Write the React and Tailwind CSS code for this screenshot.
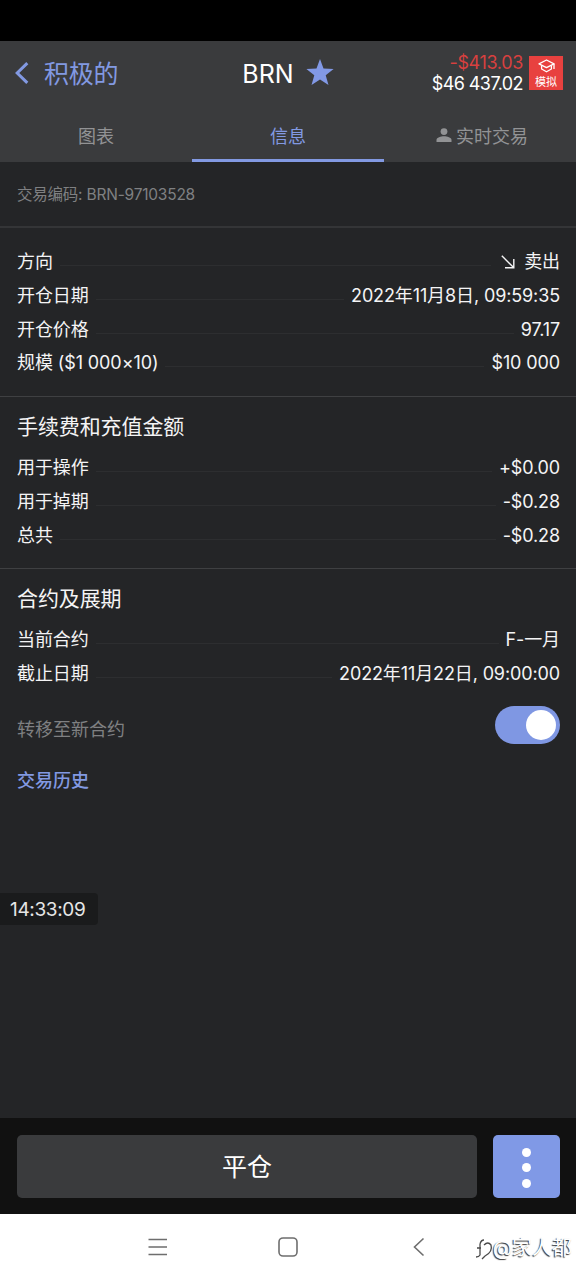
import { useState } from "react";
import clsx from "clsx";

const positionRows = [
  { label: "方向", value: "卖出", arrow: true },
  { label: "开仓日期", value: "2022年11月8日, 09:59:35" },
  { label: "开仓价格", value: "97.17" },
  { label: "规模 ($1 000×10)", value: "$10 000" },
];

const feeRows = [
  { label: "用于操作", value: "+$0.00" },
  { label: "用于掉期", value: "-$0.28" },
  { label: "总共", value: "-$0.28" },
];

const contractRows = [
  { label: "当前合约", value: "F-一月" },
  { label: "截止日期", value: "2022年11月22日, 09:00:00" },
];

const Row = ({ label, value, arrow }) => (
  <div className="flex h-[33.7px] items-center text-[18px] leading-none text-[#f4f4f5]">
    <span className="pt-[3px] tracking-[-0.1px] whitespace-nowrap">{label}</span>
    <span className="mx-[7px] mt-[10px] h-px flex-1 bg-[#2d2e30]" />
    {arrow && (
      <svg className="mt-[2px] mr-[9px] ml-[3px]" width="14" height="14" viewBox="0 0 14 14" fill="none" stroke="currentColor" strokeWidth="1.4">
        <path d="M0.8 0.8L12.6 12.6M12.8 4V12.8H4" />
      </svg>
    )}
    <span className="pt-[3px] tracking-[-0.12px] whitespace-nowrap">{value}</span>
  </div>
);

const Header = () => (
  <header className="h-[121px] bg-[#3a3b3d]">
    <div className="grid h-[64px] grid-cols-3 items-center">
      <button className="flex items-center gap-[15px] pl-[15px] text-[25px] leading-none text-[#8299e2]">
        <svg width="14" height="22" viewBox="0 0 14 22" fill="none" stroke="currentColor" strokeWidth="3">
          <path d="M12.3 1.2L2.2 11L12.3 20.8" />
        </svg>
        <span className="pt-[3px] tracking-[-0.2px]">积极的</span>
      </button>
      <div className="flex items-center justify-center gap-[12px] text-[25px] leading-none text-white">
        <span className="pt-[2px]">BRN</span>
        <svg className="-mt-[2px]" width="28" height="27" viewBox="0 0 28 27" fill="#8299e6">
          <path d="M14 0L17.5 9.6L27.6 10L19.7 16.2L22.5 26L14 20.4L5.5 26L8.3 16.2L0.4 10L10.5 9.6Z" />
        </svg>
      </div>
      <div className="flex items-center justify-end gap-[6px] pr-[13px]">
        <div className="text-right text-[18px] leading-[21px] whitespace-nowrap">
          <p className="tracking-[-0.35px] text-[#d8403f]">-$413.03</p>
          <p className="tracking-[-0.6px] text-white">$46 437.02</p>
        </div>
        <div className="mb-px flex h-[34px] w-[34px] flex-col items-center bg-[#e8413f] pt-[3px] text-white">
          <svg width="17" height="14" viewBox="0 0 17 14" fill="none" stroke="currentColor" strokeWidth="1.3" strokeLinejoin="round">
            <path d="M8.5 1L16 4.8L8.5 8.6L1 4.8Z" />
            <path d="M3.6 6.4V10L8.5 12.8L13.4 10V6.4M16 4.8V10" />
          </svg>
          <span className="mt-[4px] text-[11px] leading-none">模拟</span>
        </div>
      </div>
    </div>
    <nav className="grid h-[57px] grid-cols-3 text-[18px] leading-none">
      <button className="border-b-3 border-transparent pt-[9px] text-[#929395]">图表</button>
      <button className="border-b-3 border-[#8299e2] pt-[9px] text-[#8299e2]">信息</button>
      <button className="flex items-center justify-center gap-[4px] border-b-3 border-transparent pt-[7px] pl-[4px] text-[#929395]">
        <svg width="16" height="15" viewBox="0 0 16 15" fill="currentColor">
          <circle cx="8" cy="3.6" r="3.4" />
          <path d="M0.5 14V12C0.5 9.6 5 8.3 8 8.3S15.5 9.6 15.5 12V14Z" />
        </svg>
        <span className="pt-[2px]">实时交易</span>
      </button>
    </nav>
  </header>
);

const App = () => {
  const [rollover, setRollover] = useState(true);

  return (
    <div className="flex h-[1280px] w-[576px] flex-col overflow-hidden bg-[#242527] font-['Inter','Noto_Sans_CJK_SC',sans-serif]">
      <div className="h-[41px] bg-black" />
      <Header />

      <main className="flex-1">
        <div className="flex h-[66px] items-center border-b-2 border-[#343537] px-[17px] pt-[2px] text-[15.5px] leading-none tracking-[-0.22px] text-[#7f8082]">
          交易编码: BRN-97103528
        </div>

        <section className="h-[169px] border-b border-[#3f4042] pt-[16px] pr-[16px] pl-[17px]">
          {positionRows.map((row) => (
            <Row key={row.label} {...row} />
          ))}
        </section>

        <section className="h-[172px] border-b border-[#3f4042] pt-[19px] pr-[16px] pl-[17px]">
          <h2 className="mb-[13px] text-[21px] leading-[21px] tracking-[-0.1px] text-[#f4f4f5]">手续费和充值金额</h2>
          {feeRows.map((row) => (
            <Row key={row.label} {...row} />
          ))}
        </section>

        <section className="pt-[19px] pr-[16px] pl-[17px]">
          <h2 className="mb-[13px] text-[21px] leading-[21px] tracking-[-0.1px] text-[#f4f4f5]">合约及展期</h2>
          {contractRows.map((row) => (
            <Row key={row.label} {...row} />
          ))}
          <div className="mt-[17px] flex h-[38px] items-start justify-between">
            <span className="mt-[15px] text-[18px] leading-none text-[#7f8082]">转移至新合约</span>
            <button
              onClick={() => setRollover(!rollover)}
              className={clsx(
                "flex h-[38px] w-[65px] items-center rounded-full px-[4px]",
                rollover ? "justify-end bg-[#7f97e3]" : "justify-start bg-[#4a4b4d]"
              )}
            >
              <span className="h-[30px] w-[30px] rounded-full bg-white" />
            </button>
          </div>
          <button className="mt-[28px] block text-[18px] leading-none font-medium text-[#8299e2]">交易历史</button>
        </section>

        <div className="mt-[103px] flex h-[32px] w-[98px] items-center rounded-r-[4px] bg-[#1a1b1c] pl-[10px] text-[19px] leading-none tracking-[-0.35px] text-[#e6e6e6]">
          14:33:09
        </div>
      </main>

      <footer className="flex h-[96px] justify-between bg-[#111111] pt-[17px] pr-[16px] pl-[17px]">
        <button className="h-[63px] w-[460px] rounded-[5px] bg-[#3a3b3d] pt-[2px] text-[25px] leading-none text-white">平仓</button>
        <button className="flex h-[63px] w-[67px] flex-col items-center justify-center gap-[6.5px] rounded-[5px] bg-[#8099e6] pt-[2px]">
          <span className="h-[9px] w-[9px] rounded-full bg-white" />
          <span className="h-[9px] w-[9px] rounded-full bg-white" />
          <span className="h-[9px] w-[9px] rounded-full bg-white" />
        </button>
      </footer>

      {/* Android navigation bar */}
      <div className="relative flex h-[66px] items-center bg-white pl-[148px] text-[#6e6e6e]">
        <svg width="20" height="20" viewBox="0 0 20 20" fill="none" stroke="currentColor" strokeWidth="1.6">
          <path d="M0.5 2.5H19M0.5 10H19M0.5 17.5H19" />
        </svg>
        <svg className="ml-[110px]" width="20" height="20" viewBox="0 0 20 20" fill="none" stroke="currentColor" strokeWidth="1.6">
          <rect x="1" y="1" width="18" height="18" rx="4" />
        </svg>
        <svg className="ml-[115px]" width="12" height="20" viewBox="0 0 12 20" fill="none" stroke="currentColor" strokeWidth="1.6">
          <path d="M10.5 1.5L1.5 10L10.5 18.5" />
        </svg>
        <div className="absolute top-[21px] right-[4px] flex items-center text-[20px] leading-[26px] text-white [text-shadow:-1px_1px_1px_#333]">
          <svg className="overflow-visible" width="18" height="22" viewBox="0 0 18 22" fill="none" stroke="#4a4a4a" strokeWidth="1.3">
            <path d="M5 7V18Q4 20 1 20M2 11H6M5 7Q6 3 9 3M9 8Q13 4 16 8Q18 15 10 19L7 22" />
          </svg>
          @家人都
        </div>
      </div>
    </div>
  );
};

export default App;
